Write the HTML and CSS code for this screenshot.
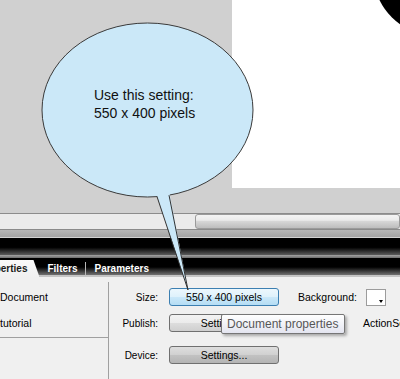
FILE: index.html
```html
<!DOCTYPE html>
<html lang="en">
<head>
    <meta charset="UTF-8">
    <title>Document size setting</title>
    <link rel="stylesheet" href="styles.css">
</head>
<body>
<div class="workspace">
    <div class="stage">
        <div class="stage-circle"></div>
    </div>
</div>
<div class="hscroll">
    <div class="hscroll-thumb"></div>
</div>
<div class="dock-top"></div>
<div class="panel-title"><span class="panel-title-text">Properties</span></div>
<div class="title-sep"></div>
<div class="tabbar">
    <div class="tab tab-active">Properties</div>
    <div class="tab">Filters</div>
    <div class="tab-sep"></div>
    <div class="tab">Parameters</div>
</div>
<div class="panel-body">
    <div class="doc-col">
        <div class="doc-row">Document</div>
        <div class="doc-row">tutorial</div>
        <div class="hline"></div>
    </div>
    <div class="vsep"></div>
    <div class="props">
        <div class="prow">
            <span class="plabel">Size:</span>
            <button type="button" class="btn btn-hover">550 x 400 pixels</button>
            <span class="ptext ptext-bg">Background:</span>
            <span class="swatch"></span>
        </div>
        <div class="prow prow-2">
            <span class="plabel">Publish:</span>
            <button type="button" class="btn">Settings...</button>
            <span class="ptext ptext-as">ActionScript: 2.0</span>
        </div>
        <div class="prow prow-3">
            <span class="plabel">Device:</span>
            <button type="button" class="btn btn-dark">Settings...</button>
        </div>
    </div>
</div>

<div class="tooltip">Document properties</div>

<!-- speech bubble pointing at the size button -->
<svg class="callout" width="400" height="379" viewBox="0 0 400 379">
    <ellipse cx="147.5" cy="110" rx="105.5" ry="87" fill="#cbe8f8" stroke="#3a3a3a" stroke-width="1"/>
    <polygon points="156.5,194 188,290 169.5,193" fill="#cbe8f8"/>
    <polyline points="157,196.6 188,290 169,195.2" fill="none" stroke="#333" stroke-width="1"/>
    <text x="94" y="100" class="callout-text">Use this setting:</text>
    <text x="94" y="118" class="callout-text">550 x 400 pixels</text>
</svg>
</body>
</html>
```

FILE: styles.css
```css
body {
    margin: 0;
    width: 400px;
    height: 379px;
    overflow: hidden;
    position: relative;
    font-family: "Liberation Sans", Arial, sans-serif;
    font-size: 10.5px;
    color: #000;
    background-color: #f0f0f0;
}

.workspace {
    height: 213px;
    background-color: #d0d0d0;
}

.stage {
    margin-left: 232px;
    width: 168px;
    height: 188px;
    background-color: #fff;
    position: relative;
    overflow: hidden;
}

.stage-circle {
    position: absolute;
    left: 141px;
    top: -92px;
    width: 128px;
    height: 128px;
    border-radius: 50%;
    background-color: #000;
}

.hscroll {
    height: 15px;
    border-top: 1px solid #8c8c8c;
    border-bottom: 1px solid #8a8a8a;
    background-color: #ebebeb;
    overflow: hidden;
}

.hscroll-thumb {
    margin-left: 195px;
    height: 13px;
    border: 1px solid #9a9a9a;
    border-radius: 3px;
    background: linear-gradient(#f4f4f4 0, #ebebeb 40%, #d6d6d6 50%, #bdbdbd 100%);
}

.dock-top {
    height: 7px;
    background: linear-gradient(#b6b6b6, #a3a3a3);
    border-bottom: 1px solid #d2d2d2;
}

.panel-title {
    height: 17px;
    line-height: 17px;
    background: linear-gradient(#000 0, #000 55%, #5c5c5c 100%);
    color: #fff;
    font-weight: bold;
    font-size: 10px;
    white-space: nowrap;
    overflow: hidden;
}

.panel-title-text {
    display: inline-block;
    margin-left: -50px;
}

.title-sep {
    height: 3px;
    background: linear-gradient(#a4a4a4, #6c6c6c);
}

.tabbar {
    height: 19px;
    display: flex;
    align-items: flex-end;
    background: linear-gradient(#000 0, #000 9px, #727272 17px, #c4c4c4 17px, #c4c4c4 19px);
    font-weight: bold;
    font-size: 10px;
    white-space: nowrap;
    overflow: hidden;
}

.tab {
    flex: none;
    height: 17px;
    line-height: 17px;
    color: #fff;
    padding: 0 8px;
}

.tab-active {
    margin-left: -30px;
    padding: 0 12px 0 8px;
    color: #1a1a1a;
    background: linear-gradient(#fafafa, #f0f0f0);
    clip-path: polygon(0 0, calc(100% - 6px) 0, 100% 100%, 0 100%);
}

.tab-active + .tab {
    margin-left: 0;
}

.tab-sep {
    flex: none;
    width: 1px;
    height: 13px;
    margin-bottom: 2px;
    background-color: #b8b8b8;
}

.panel-body {
    height: 102px;
    display: flex;
    background-color: #f0f0f0;
}

.doc-col {
    flex: none;
    width: 108px;
    padding-top: 11px;
}

.doc-row {
    height: 18px;
    line-height: 18px;
    margin-bottom: 8px;
    white-space: nowrap;
}

.hline {
    margin-top: -3px;
    height: 1px;
    background-color: #a0a0a0;
}

.vsep {
    flex: none;
    width: 1px;
    margin-top: 5px;
    background-color: #a0a0a0;
}

.props {
    flex: 1;
    min-width: 0;
    padding-top: 11px;
    overflow: hidden;
}

.prow {
    display: flex;
    align-items: center;
    height: 18px;
    white-space: nowrap;
}

.prow > * {
    flex: none;
}

.prow-2 {
    margin-top: 8px;
}

.prow-3 {
    margin-top: 14px;
}

.plabel {
    width: 49px;
    margin-right: 11px;
    text-align: right;
    font-size: 10px;
}

.btn {
    width: 110px;
    height: 18px;
    padding: 0;
    border: 1px solid #707070;
    border-radius: 3px;
    font-family: "Liberation Sans", Arial, sans-serif;
    font-size: 10.5px;
    color: #000;
    background: linear-gradient(#f3f3f3 0, #ebebeb 50%, #dddddd 50%, #cfcfcf 100%);
}

.btn-hover {
    border-color: #3c7fb1;
    background: linear-gradient(#ecf7fd 0, #def1fb 50%, #cbe8f9 50%, #b5ddf4 100%);
}

.btn-dark {
    background: linear-gradient(#dedede 0, #d0d0d0 50%, #c2c2c2 50%, #b4b4b4 100%);
}

.ptext-bg {
    margin-left: 19px;
}

.ptext-as {
    margin-left: 84px;
}

.swatch {
    width: 18px;
    height: 15px;
    margin-left: 9px;
    border: 1px solid #9c9c9c;
    background-color: #fff;
    position: relative;
}

.swatch::after {
    content: "";
    position: absolute;
    right: 2px;
    bottom: 2px;
    border-left: 2px solid transparent;
    border-right: 2px solid transparent;
    border-top: 3px solid #000;
}

.tooltip {
    position: absolute;
    left: 221px;
    top: 314px;
    width: 117px;
    height: 18px;
    line-height: 18px;
    padding-left: 5px;
    border: 1px solid #767676;
    border-radius: 2px;
    background: linear-gradient(#ffffff, #e4e5f0);
    color: #575757;
    font-size: 12px;
    white-space: nowrap;
    box-shadow: 2px 2px 3px rgba(0, 0, 0, 0.3);
}

.callout {
    position: absolute;
    left: 0;
    top: 0;
    pointer-events: none;
}

.callout-text {
    font-family: "Liberation Sans", Arial, sans-serif;
    font-size: 14px;
    fill: #111;
}
```
